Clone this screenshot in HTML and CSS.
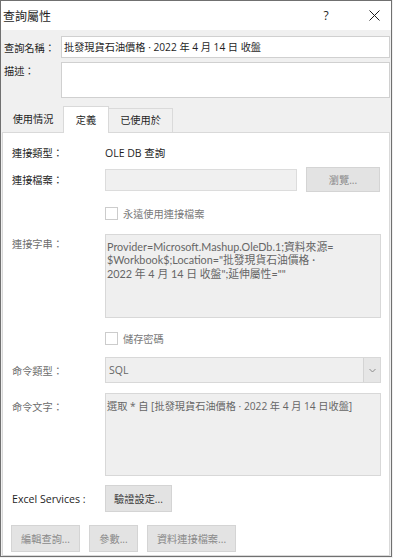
FILE: index.html
```html
<!DOCTYPE html>
<html lang="zh-Hant">
<head>
<meta charset="utf-8">
<title>查詢屬性</title>
<link rel="stylesheet" href="styles.css">
</head>
<body>
<div class="window">
  <div class="titlebar">
    <span class="title">查詢屬性</span>
    <span class="help">?</span>
    <span class="close"><svg width="11" height="11" viewBox="0 0 11 11"><path d="M0.5 0.5L10.5 10.5M10.5 0.5L0.5 10.5" stroke="#1e1e1e" stroke-width="1" fill="none"/></svg></span>
  </div>
  <div class="body">
    <div class="top-row">
      <span class="top-label">查詢名稱：</span>
      <div class="textbox name-box">批發現貨石油價格 · 2022 年 4 月 14 日 收盤</div>
    </div>
    <div class="top-row desc-row">
      <span class="top-label desc-label">描述：</span>
      <div class="textbox desc-box"></div>
    </div>
    <div class="tabs">
      <div class="tab tab-usage">使用情況</div>
      <div class="tab tab-active">定義</div>
      <div class="tab tab-used">已使用於</div>
    </div>
    <div class="panel">
      <div class="row row-type">
        <span class="label">連接類型：</span>
        <span class="value">OLE DB 查詢</span>
      </div>
      <div class="row row-file">
        <span class="label">連接檔案：</span>
        <div class="file-box"></div>
        <div class="btn browse-btn">瀏覽...</div>
      </div>
      <div class="row row-check1">
        <span class="checkbox"></span>
        <span class="check-text">永遠使用連接檔案</span>
      </div>
      <div class="row row-conn">
        <span class="label label-disabled label-top">連接字串：</span>
        <div class="area conn-area">Provider=Microsoft.Mashup.OleDb.1;資料來源=<br>$Workbook$;Location="批發現貨石油價格 ·<br>2022 年 4 月 14 日 收盤";延伸屬性=""</div>
      </div>
      <div class="row row-check2">
        <span class="checkbox"></span>
        <span class="check-text">儲存密碼</span>
      </div>
      <div class="row row-cmdtype">
        <span class="label label-disabled">命令類型：</span>
        <div class="select">
          <span class="select-text">SQL</span>
          <span class="select-arrow"><svg width="7" height="5" viewBox="0 0 7 5"><path d="M0.5 1L3.5 4L6.5 1" stroke="#8a8a8a" stroke-width="1" fill="none"/></svg></span>
        </div>
      </div>
      <div class="row row-cmdtext">
        <span class="label label-disabled label-top2">命令文字：</span>
        <div class="area cmd-area">選取 * 自 [批發現貨石油價格 · 2022 年 4 月 14 日收盤]</div>
      </div>
      <div class="row row-excel">
        <span class="label excel-label">Excel Services :</span>
        <div class="btn auth-btn">驗證設定...</div>
      </div>
      <div class="row row-buttons">
        <div class="btn bottom-btn edit-btn">編輯查詢...</div>
        <div class="btn bottom-btn param-btn">參數...</div>
        <div class="btn bottom-btn odc-btn">資料連接檔案...</div>
      </div>
    </div>
  </div>
</div>
</body>
</html>
```

FILE: styles.css
```css
* { box-sizing: border-box; }
html, body { margin: 0; padding: 0; }
body {
  width: 393px;
  height: 558px;
  background: #f0f0f0;
  font-family: "Open Sans", "Noto Sans CJK TC", sans-serif;
  font-size: 10.2px;
  color: #1e1e1e;
}
.window {
  width: 392px;
  height: 557px;
  border: 1px solid #707070;
  background: #f0f0f0;
  display: flex;
  flex-direction: column;
}
.titlebar {
  height: 29px;
  flex: none;
  background: #fff;
  display: flex;
  align-items: center;
  padding-left: 2px;
}
.title { flex: 1; font-size: 12px; }
.help {
  width: 20px;
  text-align: center;
  font-size: 12px;
  margin-right: 28px;
}
.close {
  width: 20px;
  height: 20px;
  display: flex;
  align-items: center;
  justify-content: center;
  margin-right: 7px;
}
.body {
  flex: 1;
  display: flex;
  flex-direction: column;
  padding: 6px 1px 0 1px;
}
.top-row { display: flex; align-items: center; padding-left: 2px; }
.top-label { width: 57px; }
.textbox {
  flex: 1;
  background: #fff;
  border: 1px solid #d0d0d0;
}
.name-box { height: 22px; line-height: 20px; padding-left: 2px; }
.desc-row { margin-top: 4px; align-items: flex-start; }
.desc-label { padding-top: 1px; }
.desc-box { height: 36px; }
.tabs {
  display: flex;
  align-items: flex-end;
  margin-top: 8px;
  height: 26px;
  padding-left: 1px;
}
.tab {
  height: 24px;
  line-height: 23px;
  text-align: center;
}
.tab-usage { width: 60px; }
.tab-active {
  width: 46px;
  height: 27px;
  line-height: 27px;
  background: #fff;
  border: 1px solid #d9d9d9;
  border-bottom: none;
  margin-bottom: -1px;
  position: relative;
  z-index: 1;
}
.tab-used {
  width: 64px;
  border-top: 1px solid #dadada;
  border-right: 1px solid #dadada;
}
.panel {
  flex: 1;
  background: #fff;
  border: 1px solid #d9d9d9;
  padding-left: 9px;
  display: flex;
  flex-direction: column;
}
.row { display: flex; align-items: center; }
.label { width: 93px; flex: none; }
.label-disabled { color: #6d6d6d; }
.row-type { margin-top: 9px; height: 20px; }
.value { font-size: 10.5px; }
.row-file { margin-top: 5px; height: 25px; }
.file-box {
  width: 192px;
  height: 22px;
  background: #f0f0f0;
  border: 1px solid #dcdcdc;
}
.btn {
  background: #e3e3e3;
  border: 1px solid #d4d4d4;
  display: flex;
  align-items: center;
  justify-content: center;
  color: #8a8a8a;
}
.browse-btn { margin-left: 9px; width: 74px; height: 25px; }
.row-check1 { margin-top: 14px; padding-left: 93px; }
.row-check2 { margin-top: 13px; padding-left: 93px; }
.checkbox {
  width: 13px;
  height: 13px;
  border: 1px solid #cccccc;
  background: #fff;
  flex: none;
}
.check-text { margin-left: 5px; color: #7a7a7a; }
.row-conn { margin-top: 13px; align-items: flex-start; }
.label-top { padding-top: 2px; }
.area {
  width: 276px;
  background: #efefef;
  border: 1px solid #d8d8d8;
  color: #666;
  padding: 5px 2px 0 1px;
  line-height: 13.4px;
}
.conn-area {
  height: 84px;
  font-family: "Lato", "Noto Sans CJK TC", sans-serif;
  font-size: 10.8px;
}
.row-cmdtype { margin-top: 11px; }
.select {
  width: 276px;
  height: 26px;
  background: #efefef;
  border: 1px solid #d8d8d8;
  display: flex;
  align-items: stretch;
}
.select-text { flex: 1; padding-left: 3px; line-height: 24px; color: #666; font-size: 10.5px; }
.select-arrow {
  width: 17px;
  background: #e6e6e6;
  border-left: 1px solid #d4d4d4;
  display: flex;
  align-items: center;
  justify-content: center;
}
.row-cmdtext { margin-top: 10px; align-items: flex-start; }
.label-top2 { padding-top: 6px; }
.cmd-area { height: 83px; padding-top: 6px; }
.row-excel { margin-top: 9px; }
.excel-label { font-size: 10.6px; }
.auth-btn { width: 67px; height: 27px; color: #3a3a3a; }
.row-buttons { margin-top: 13px; margin-left: -1px; gap: 9px; }
.bottom-btn { height: 27px; }
.edit-btn { width: 69px; }
.param-btn { width: 49px; }
.odc-btn { width: 89px; }
```
